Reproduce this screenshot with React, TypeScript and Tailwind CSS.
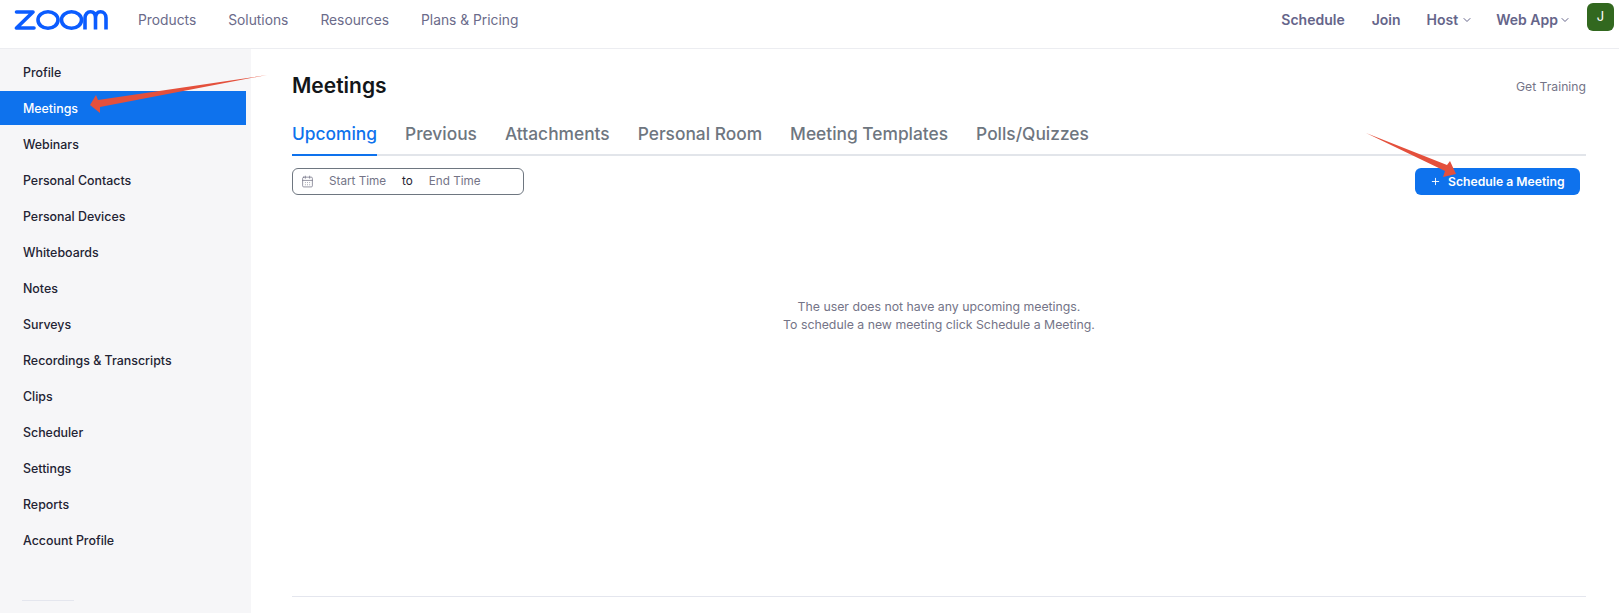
import { ChevronDown, Plus, CalendarDays } from 'lucide-react'

const navLinks = ['Products', 'Solutions', 'Resources', 'Plans & Pricing']
const tabs = ['Upcoming', 'Previous', 'Attachments', 'Personal Room', 'Meeting Templates', 'Polls/Quizzes']
const sideItems = [
  'Profile',
  'Meetings',
  'Webinars',
  'Personal Contacts',
  'Personal Devices',
  'Whiteboards',
  'Notes',
  'Surveys',
  'Recordings & Transcripts',
  'Clips',
  'Scheduler',
  'Settings',
  'Reports',
  'Account Profile',
]

function ZoomLogo() {
  return (
    <svg width="94" height="22" viewBox="0 0 94 22" fill="none" stroke="#0b5cff" strokeWidth="3.6" aria-label="zoom logo">
      <path d="M2.5 3H19L2.5 19H20" strokeLinejoin="round" strokeLinecap="round" />
      <ellipse cx="34" cy="11" rx="10" ry="8.2" />
      <ellipse cx="57.5" cy="11" rx="10" ry="8.2" />
      <path d="M71 20.5V9C71 5 73.5 2.8 76.5 2.8C79.5 2.8 81.5 5 81.5 9V20.5M81.5 9C81.5 5 83.5 2.8 86.5 2.8C89.5 2.8 92 5 92 9V20.5" />
    </svg>
  )
}

export default function App() {
  return (
    <div className="relative h-[613px] w-[1619px] overflow-hidden bg-white font-['Inter','Liberation_Sans',sans-serif]">
      {/* Header */}
      <header className="flex h-[49px] items-start justify-between border-b border-[#ecedf1] pl-[14px] pr-[5px]">
        <div className="flex items-start pt-[9px]">
          <ZoomLogo />
          <nav className="ml-[30px] flex gap-8 pt-[1px] text-[13.8px] text-[#6b6b8a]">
            {navLinks.map((link) => (
              <span key={link}>{link}</span>
            ))}
          </nav>
        </div>
        <div className="flex items-start pt-[3px] text-[14px] font-semibold text-[#65658a]">
          <span className="mt-[6px]">Schedule</span>
          <span className="ml-[27px] mt-[6px]">Join</span>
          <span className="ml-[26px] mt-[6px] flex items-center gap-[3px]">Host <ChevronDown size={12} strokeWidth={2} /></span>
          <span className="ml-[23px] mt-[6px] flex items-center gap-[1px]">Web App <ChevronDown size={12} strokeWidth={2} /></span>
          <span className="ml-[16px] flex h-[28px] w-[27px] items-center justify-center rounded-md bg-[#32681f] text-[13px] font-normal text-white">J</span>
        </div>
      </header>

      <div className="flex h-[564px]">
        {/* Sidebar */}
        <aside className="flex w-[251px] flex-col bg-[#f6f6f8] pt-[6px]">
          {sideItems.map((item) => (
            <div
              key={item}
              className={`flex w-[246px] items-center pl-[23px] text-[12.4px] font-medium ${
                item === 'Meetings' ? 'mb-[2px] h-[34px] bg-[#0e72ed] pt-[2px] text-white' : 'h-[36px] text-[#232333]'
              }`}
            >
              {item}
            </div>
          ))}
          <div className="ml-[22px] mt-[41px] h-px w-[52px] bg-[#e4e6ee]" />
        </aside>

        {/* Main */}
        <main className="flex-1 pl-[41px] pr-[33px]">
          <div className="flex h-[70px] items-center justify-between pt-[3px]">
            <h1 className="text-[21px] font-semibold text-[#131619]">Meetings</h1>
            <span className="pt-[4px] text-[12.2px] text-[#747487]">Get Training</span>
          </div>

          <div className="flex h-[37px] gap-7 border-b-2 border-[#e2e5ea] text-[17.35px] font-medium text-[#6e7680]">
            {tabs.map((tab) => (
              <div
                key={tab}
                className={`-mb-[2px] flex items-start pt-[2px] ${tab === 'Upcoming' ? 'border-b-2 border-[#0e72ed] text-[#0e72ed]' : ''}`}
              >
                {tab}
              </div>
            ))}
          </div>

          <div className="mt-[12px] flex items-center justify-between pr-[6px]">
            <div className="flex h-[27px] w-[232px] items-center rounded-md border border-[#6e7680] pl-[8px] text-[11.7px] text-[#747487]">
              <CalendarDays size={13} strokeWidth={1.4} />
              <span className="ml-[15px] pt-[1px]">Start Time</span>
              <span className="ml-[16px] pt-[1px] text-[#232333]">to</span>
              <span className="ml-[16px] pt-[1px]">End Time</span>
            </div>
            <button className="flex h-[27px] w-[165px] items-center rounded-md bg-[#0e72ed] pl-[15px] text-[12.2px] font-semibold text-white">
              <Plus size={11} className="mr-[7px]" />
              <span className="pt-[1px]">Schedule a Meeting</span>
            </button>
          </div>

          <div className="mt-[103px] text-center text-[12.3px] leading-[18px] text-[#747487]">
            <p>The user does not have any upcoming meetings.</p>
            <p>To schedule a new meeting click Schedule a Meeting.</p>
          </div>

          <div className="mt-[262px] h-px bg-[#e4e6ee]" />
        </main>
      </div>

      {/* Annotation arrows */}
      <svg className="pointer-events-none absolute left-0 top-0" width="1619" height="613" fill="#e4503c">
        <path d="M267 75L98 100L96 95L90 105L100 113L100 107Z" />
        <path d="M1366 133L1447 165L1450 161L1456 174L1443 177L1445 171Z" />
      </svg>
    </div>
  )
}
